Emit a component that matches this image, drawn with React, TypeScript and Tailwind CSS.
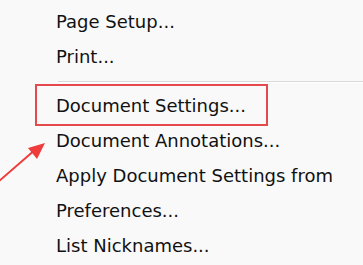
import React from 'react';

const items = [
  { label: 'Page Setup...' },
  { label: 'Print...' },
  { sep: true },
  { label: 'Document Settings...' },
  { label: 'Document Annotations...' },
  { label: 'Apply Document Settings from' },
  { label: 'Preferences...' },
  { label: 'List Nicknames...' },
];

const App: React.FC = () => {
  return (
    <div className="relative w-[363px] h-[265px] overflow-hidden bg-[#f9f9f9] text-[#111] font-['DejaVu_Sans',sans-serif] text-[18px]">
      <div className="flex flex-col pt-[4px]">
        {items.map((it, i) =>
          it.sep ? (
            <div key={i} className="ml-[58px] mt-[7px] mb-[5px] h-[2px] border-t border-[#d9d9d9] border-b border-b-white" />
          ) : (
            <div key={i} className="h-[35px] flex items-center pl-[56px] whitespace-nowrap">
              {it.label}
            </div>
          )
        )}
      </div>

      {/* annotation box */}
      <div className="absolute left-[35px] top-[84px] w-[233px] h-[42px] border-2 border-[#e5484d]" />

      {/* annotation arrow */}
      <svg className="absolute left-0 top-[135px]" width="60" height="55" viewBox="0 0 60 55">
        <line x1="-2" y1="47" x2="36" y2="14" stroke="#ef3b3b" strokeWidth="2" strokeLinecap="round" />
        <polygon points="45,8 28,13 37,24" fill="#ef3b3b" />
      </svg>
    </div>
  );
};

export default App;
